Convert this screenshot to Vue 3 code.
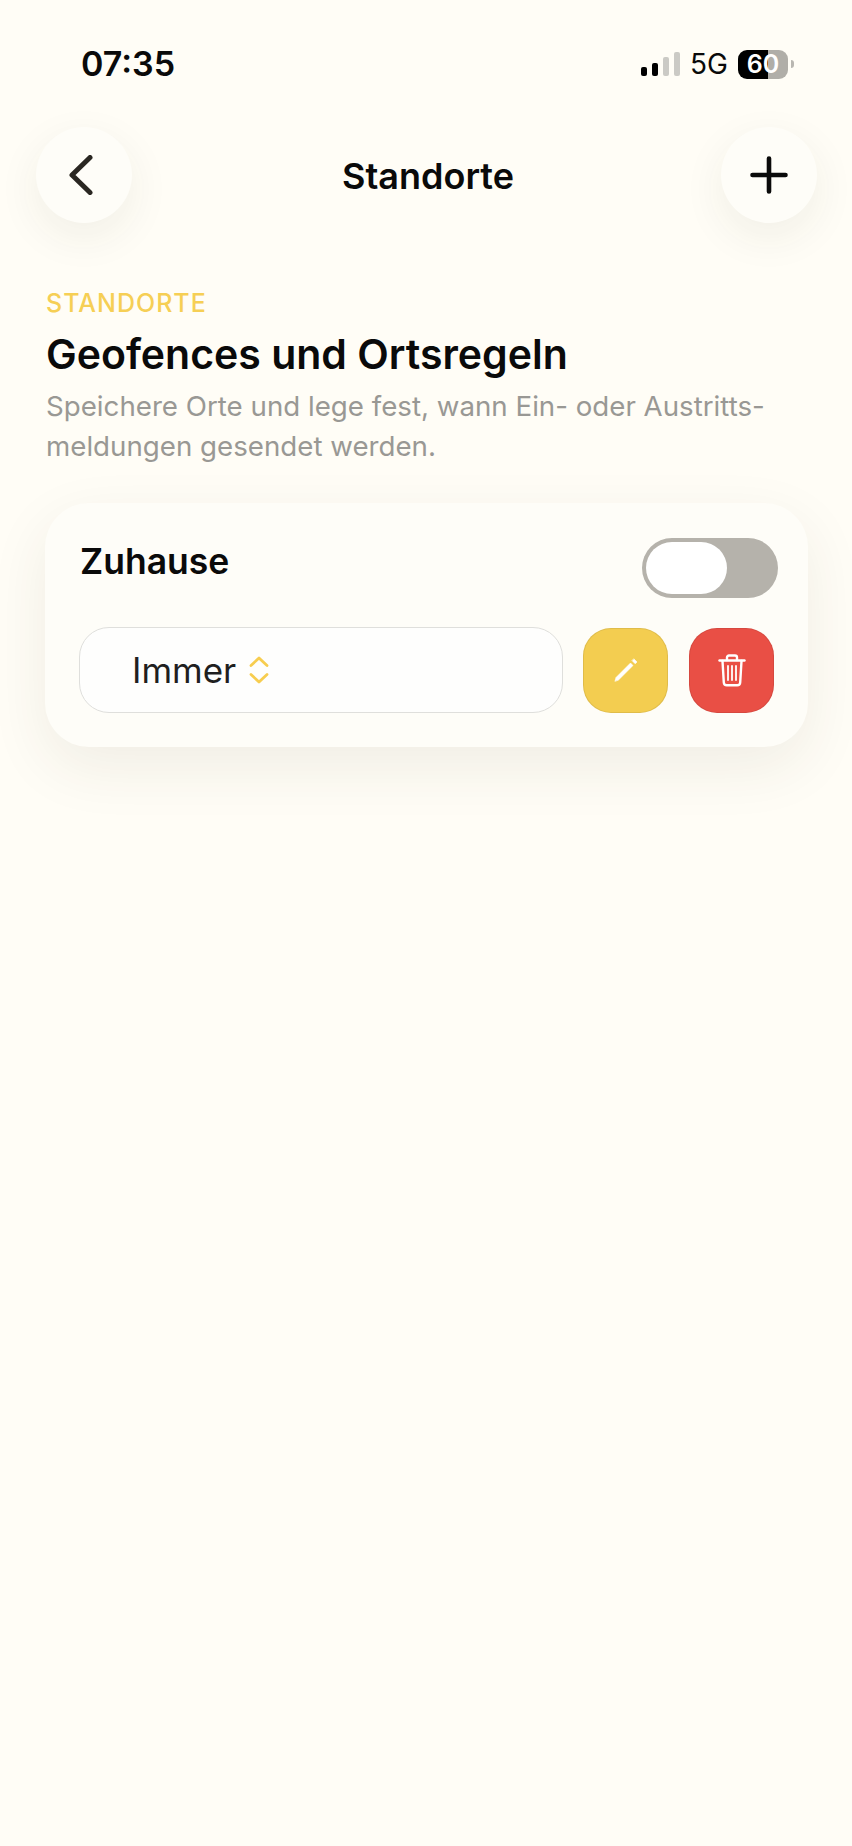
<script setup>
const signalBars = [
  { h: 9, on: true },
  { h: 13, on: true },
  { h: 19, on: false },
  { h: 24, on: false }
]
</script>

<template>
  <div class="page">
    <div class="status">
      <span class="time">07:35</span>
      <div class="status-right">
        <div class="signal">
          <i v-for="(b, i) in signalBars" :key="i" :class="{ on: b.on }" :style="{ height: b.h + 'px' }"></i>
        </div>
        <span class="net">5G</span>
        <div class="battery"><span>60</span></div>
        <i class="battery-tip"></i>
      </div>
    </div>

    <div class="nav">
      <button class="round-btn">
        <svg width="24" height="40" viewBox="0 0 24 40" fill="none" stroke="#2a2722" stroke-width="5" stroke-linecap="round" stroke-linejoin="round">
          <path d="M21 2.5 3 20l18 17.5" />
        </svg>
      </button>
      <h1 class="nav-title">Standorte</h1>
      <button class="round-btn">
        <svg width="38" height="38" viewBox="0 0 38 38" fill="none" stroke="#0a0a0a" stroke-width="4.6" stroke-linecap="round">
          <path d="M19 2.5v33M2.5 19h33" />
        </svg>
      </button>
    </div>

    <div class="intro">
      <div class="eyebrow">STANDORTE</div>
      <h2 class="headline">Geofences und Ortsregeln</h2>
      <p class="sub">Speichere Orte und lege fest, wann Ein- oder Austritts-<br>meldungen gesendet werden.</p>
    </div>

    <div class="card">
      <div class="card-top">
        <span class="place">Zuhause</span>
        <div class="toggle"><div class="thumb"></div></div>
      </div>
      <div class="card-row">
        <div class="select">
          <span>Immer</span>
          <svg width="20" height="28" viewBox="0 0 20 28" fill="none" stroke="#f7cd4f" stroke-width="2.8" stroke-linecap="round" stroke-linejoin="round">
            <path d="M2 9.5 10 2l8 7.5M2 18.5l8 7.5 8-7.5" />
          </svg>
        </div>
        <button class="square-btn edit">
          <svg width="26" height="26" viewBox="0 0 26 26" fill="none" stroke="#fff" stroke-linecap="round">
            <path d="M2 24l1-3.500L17.500 6l2.500 2.500L5.500 23z" fill="#fff" stroke-width="0.6" stroke-linejoin="round" />
            <path d="M21 2l3 3-1.800 1.800-3-3z" fill="#fff" stroke-width="0.6" stroke-linejoin="round" />
          </svg>
        </button>
        <button class="square-btn del">
          <svg width="28" height="33" viewBox="0 0 28 33" fill="none" stroke="#fff" stroke-width="2.4" stroke-linecap="round" stroke-linejoin="round">
            <path d="M1.500 6.500h25" />
            <path d="M9 6V3.500a2 2 0 0 1 2-2h6a2 2 0 0 1 2 2V6" />
            <path d="M4.500 7l1.300 21.500a3 3 0 0 0 3 2.800h10.400a3 3 0 0 0 3-2.800L23.500 7" />
            <path d="M10 12v14M14 12v14M18 12v14" stroke-width="1.800" />
          </svg>
        </button>
      </div>
    </div>
  </div>
</template>

<style scoped>
.page {
  min-height: 1846px; background: #fffdf6; padding-top: 49px;
  box-sizing: border-box; overflow: hidden;
  font-family: Inter, "Liberation Sans", sans-serif; color: #0a0a0a;
}

.status { display: flex; align-items: center; justify-content: space-between; height: 30px; padding: 0 58px 0 81px; }
.time { font-size: 34px; font-weight: 600; line-height: 30px; }
.status-right { display: flex; align-items: center; }
.signal { display: flex; align-items: flex-end; gap: 4.500px; height: 24px; margin-right: 10px; }
.signal i { display: block; width: 6.500px; border-radius: 2px; background: #cbcac5; }
.signal i.on { background: #000; }
.net { font-size: 28px; font-weight: 400; line-height: 30px; margin-right: 10px; }
.battery {
  width: 50px; height: 29px; border-radius: 9px;
  background: linear-gradient(90deg, #000 60%, #b0aea8 60%);
  display: flex; align-items: center; justify-content: center;
}
.battery span { color: #fff; font-size: 25px; font-weight: 600; line-height: 29px; }
.battery-tip { display: block; width: 3px; height: 8px; margin-left: 3px; border-radius: 0 3px 3px 0; background: #b9b7b1; }

.nav { display: flex; align-items: center; justify-content: space-between; padding: 0 35px 0 36px; margin-top: 48px; }
.round-btn {
  width: 96px; height: 96px; border: none; border-radius: 50%; padding: 0;
  background: #fefdf8; box-shadow: 0 14px 44px rgba(60, 50, 30, 0.07);
  display: flex; align-items: center; justify-content: center;
}
.round-btn:first-child svg { margin-left: -7px; }
.nav-title { margin: 2px 0 0 3px; font-size: 36px; font-weight: 600; line-height: 40px; }

.intro { padding: 0 46px; margin-top: 65px; }
.eyebrow { font-size: 25px; font-weight: 500; line-height: 30px; color: #f6cf55; letter-spacing: 1px; }
.headline { margin: 12px 0 0; font-size: 41px; font-weight: 600; line-height: 48px; }
.sub { margin: 8px 0 0; font-size: 27.700px; line-height: 40px; color: #999894; white-space: nowrap; }

.card {
  margin: 37px 44px 0 45px; height: 244px; box-sizing: border-box; padding: 35px 30px 0 34px;
  border-radius: 44px; background: #fefdf8;
  box-shadow: 0 20px 60px rgba(60, 50, 30, 0.08);
}
.card-top { display: flex; align-items: center; justify-content: space-between; height: 60px; }
.place { font-size: 35.500px; font-weight: 600; margin-left: 1px; margin-top: -14px; }
.toggle { width: 136px; height: 60px; box-sizing: border-box; padding: 4px; border-radius: 30px; background: #b5b2ab; }
.thumb { width: 81px; height: 52px; border-radius: 26px; background: #fff; }

.card-row { display: flex; align-items: center; margin-top: 29px; }
.select {
  width: 484px; height: 86px; box-sizing: border-box; border: 1.500px solid #dfdfdc; border-radius: 30px;
  background: #fefefd; display: flex; align-items: center; gap: 13px; padding-left: 52px;
  font-size: 35px; color: #1f1f1f;
}
.square-btn {
  width: 85px; height: 85px; padding: 0; border: 1px solid rgba(0, 0, 0, 0.08); border-radius: 28px;
  display: flex; align-items: center; justify-content: center;
}
.edit { background: #f3cd50; margin-left: 20px; }
.del { background: #e94f45; margin-left: 21px; }
</style>
<style>
html, body { background: #fffdf6; }
</style>
